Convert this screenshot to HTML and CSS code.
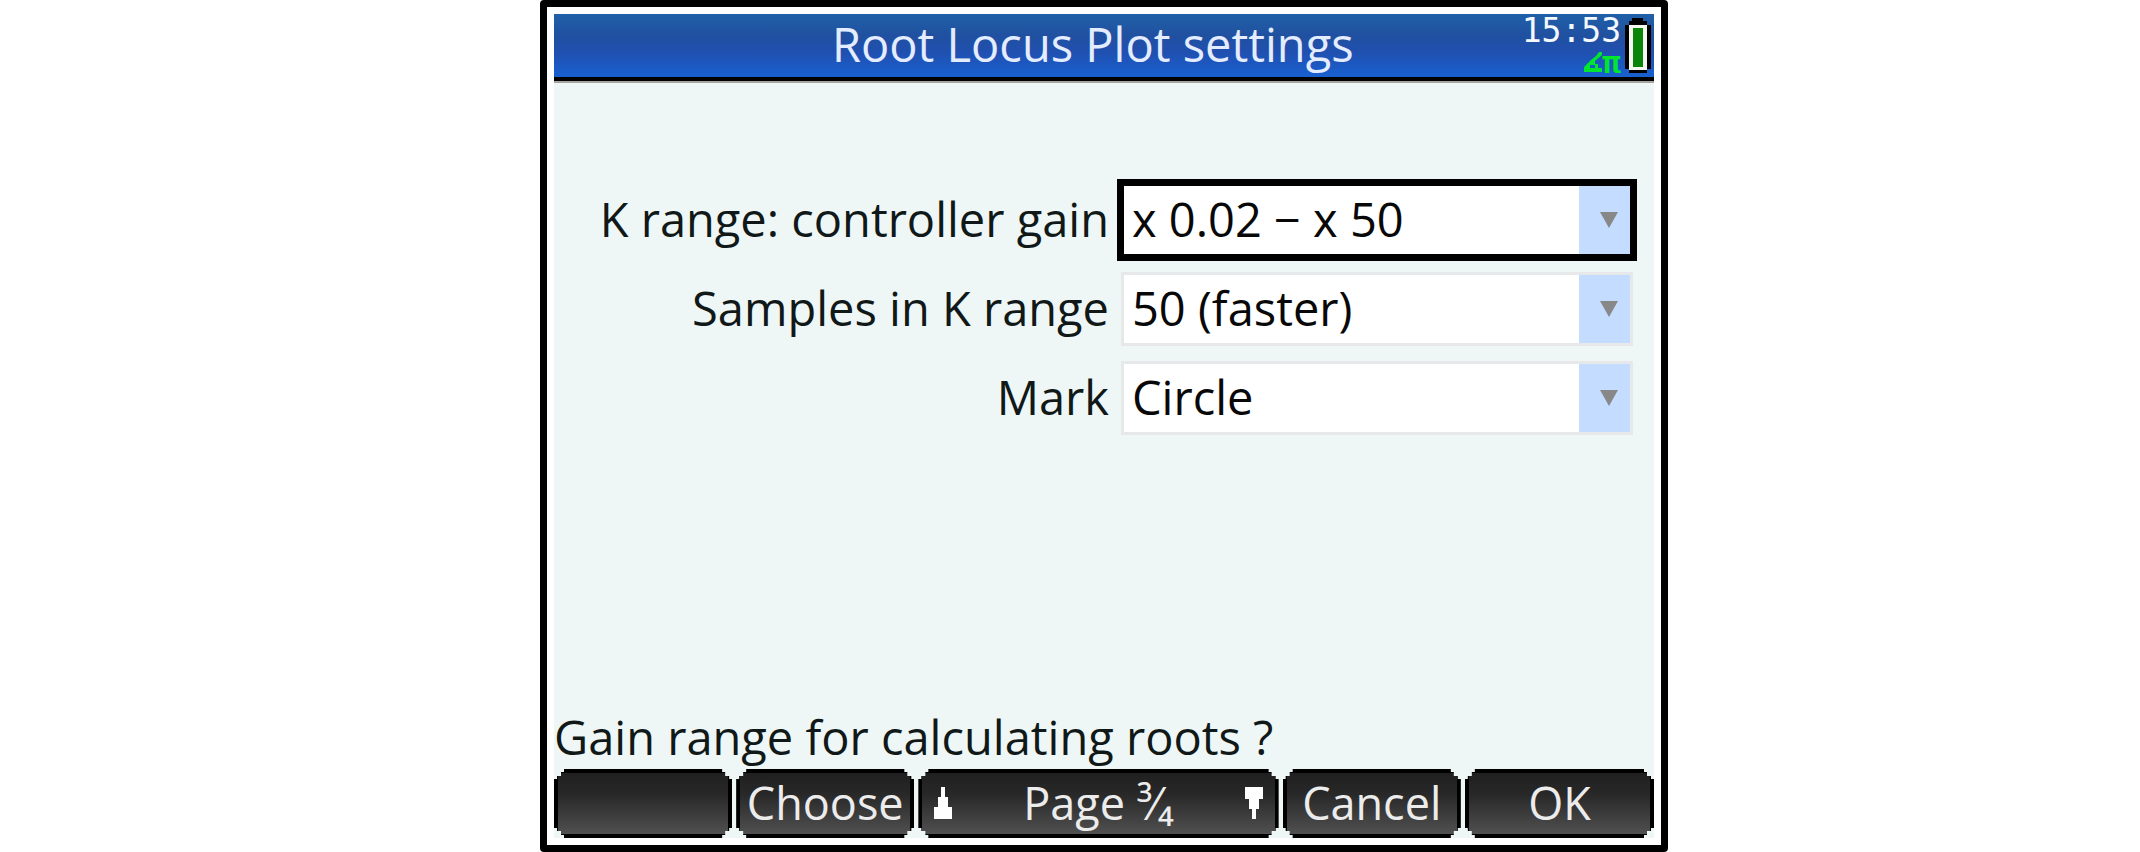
FILE: index.html
```
<!DOCTYPE html>
<html lang="en">
<head>
  <meta charset="UTF-8" />
  <meta name="viewport" content="width=device-width, initial-scale=1.0"/>
  <title>Root Locus Plot settings</title>
  <link rel="stylesheet" href="styles.css">
</head>
<body>
  <div class="calculator">
    <header class="title-bar">
      <h1>Root Locus Plot settings</h1>
      <div class="status">
        <div class="indicators">
          <span class="clock">15:53</span>
          <span class="mode">
            <svg width="18" height="20" viewBox="0 0 18 20" aria-hidden="true">
              <path d="M15 0H18V3L11 9V12H14V16H18V20H0V15L3 12L7 8L12 4ZM6 13V16H11V13Z" fill="#00e62e"/>
            </svg>
            <span>π</span>
          </span>
        </div>
        <svg class="battery" width="26" height="56" viewBox="0 0 26 56" aria-hidden="true">
          <path d="M7 0H18V3H22V7H26V51H22V55H4V51H0V7H4V3H7Z" fill="#000"/>
          <path d="M4 7H22V52H4Z" fill="#f4f8f0"/>
          <path d="M8 10H18V49H8Z" fill="#0a850a"/>
        </svg>
      </div>
    </header>

    <form class="settings">
      <label for="k-range">K range: controller gain</label>
      <div class="choice active">
        <select id="k-range"><option>x 0.02 − x 50</option></select>
        <svg class="arrow" width="18" height="16" viewBox="0 0 18 16" aria-hidden="true"><path d="M0 0H18L9 16Z"/></svg>
      </div>
      <label for="samples">Samples in K range</label>
      <div class="choice">
        <select id="samples"><option>50 (faster)</option></select>
        <svg class="arrow" width="18" height="16" viewBox="0 0 18 16" aria-hidden="true"><path d="M0 0H18L9 16Z"/></svg>
      </div>
      <label for="mark">Mark</label>
      <div class="choice">
        <select id="mark"><option>Circle</option></select>
        <svg class="arrow" width="18" height="16" viewBox="0 0 18 16" aria-hidden="true"><path d="M0 0H18L9 16Z"/></svg>
      </div>
    </form>

    <p class="help">Gain range for calculating roots ?</p>

    <div class="menu">
      <button type="button" aria-label="Empty"></button>
      <button type="button">Choose</button>
      <button type="button" class="page">
        <svg width="18" height="32" viewBox="0 0 18 32" aria-hidden="true"><path d="M7 0H11V10H14V20H18V32H0V20H4V10H7Z"/></svg>
        <span>Page ³⁄₄</span>
        <svg width="18" height="32" viewBox="0 0 18 32" aria-hidden="true"><path d="M0 0H18V12H14V22H11V32H7V22H4V12H0Z"/></svg>
      </button>
      <button type="button">Cancel</button>
      <button type="button">OK</button>
    </div>
  </div>
</body>
</html>
```
FILE: styles.css
```
* {
  box-sizing: border-box;
}
body {
  display: grid;
  grid-template-columns: 540fr 1128fr 472fr;
  min-height: 100vh;
  margin: 0;
  background: white;
  color: #101818;
  font-family: "Open Sans", "Noto Sans", sans-serif;
  font-size: 47px;
  font-weight: 500;
  line-height: 60px;
}
.calculator {
  grid-column: 2;
  display: flex;
  flex-direction: column;
  border: 7px solid black;
  border-radius: 4px;
  padding: 7px;
  background: #eef6f6 content-box;
}
.title-bar {
  display: flex;
  height: 67px;
  border-bottom: 4px solid black;
  box-shadow: 0 2px 0 #a8a4a0;
  background: linear-gradient(#2060a8, #2050a0 35%, #2050b0 60%, #1860d0);
}
h1 {
  flex: 1;
  margin: 0;
  padding-left: 110px;
  color: #e4ecff;
  font-size: 47px;
  font-weight: normal;
  text-align: center;
}
.status {
  display: flex;
  gap: 4px;
  padding: 4px 3px 0 0;
}
.indicators {
  display: flex;
  flex-direction: column;
  align-items: flex-end;
  font-family: "DejaVu Sans Mono", monospace;
}
.clock {
  color: #f4f8ff;
  font-size: 33px;
  line-height: 26px;
}
.mode {
  display: flex;
  align-items: center;
  padding-top: 4px;
  color: #00e62e;
  font-size: 31px;
  font-weight: bold;
  line-height: 28px;
}
.settings {
  display: grid;
  grid-template-columns: 555fr 520fr;
  gap: 7px 8px;
  align-items: center;
  padding: 98px 17px 0 0;
}
.settings label {
  padding-bottom: 2px;
  text-align: right;
  white-space: nowrap;
}
.choice {
  display: grid;
  align-items: center;
  margin: 4px;
  border: 3px solid #e6e8ea;
  background: linear-gradient(#c4dcff, #c4dcff) right / 51px 100% no-repeat white;
}
.choice.active {
  margin: 0;
  border: 7px solid black;
}
.choice select,
.arrow {
  grid-area: 1 / 1;
}
.choice select {
  width: 100%;
  height: 68px;
  border: 0;
  padding: 0 56px 2px 8px;
  appearance: none;
  background: transparent;
  color: #080808;
  font: inherit;
  outline: none;
}
.arrow {
  justify-self: end;
  margin-right: 12px;
  fill: #888;
  pointer-events: none;
}
.help {
  margin: auto 0 0;
  padding-bottom: 2px;
}
.menu {
  display: grid;
  grid-template-columns: 178fr 178fr 360fr 178fr 189fr;
  gap: 4px;
}
.menu button {
  min-width: 0;
  height: 69px;
  border: 4px solid black;
  padding: 0 0 2px;
  background: linear-gradient(#202020, #282828 35%, #505050);
  color: #ececec;
  font: inherit;
  font-size: 45px;
  font-weight: normal;
  white-space: nowrap;
  /* stepped corners */
  clip-path: polygon(
    0 10px, 3px 10px, 3px 7px, 7px 7px, 7px 3px, 10px 3px, 10px 0,
    calc(100% - 10px) 0, calc(100% - 10px) 3px, calc(100% - 7px) 3px, calc(100% - 7px) 7px, calc(100% - 3px) 7px, calc(100% - 3px) 10px, 100% 10px,
    100% calc(100% - 10px), calc(100% - 3px) calc(100% - 10px), calc(100% - 3px) calc(100% - 7px), calc(100% - 7px) calc(100% - 7px), calc(100% - 7px) calc(100% - 3px), calc(100% - 10px) calc(100% - 3px), calc(100% - 10px) 100%,
    10px 100%, 10px calc(100% - 3px), 7px calc(100% - 3px), 7px calc(100% - 7px), 3px calc(100% - 7px), 3px calc(100% - 10px), 0 calc(100% - 10px)
  );
}
.menu .page {
  display: flex;
  align-items: center;
  justify-content: space-between;
  padding: 0 12px 2px;
}
.page svg {
  fill: white;
}
```
